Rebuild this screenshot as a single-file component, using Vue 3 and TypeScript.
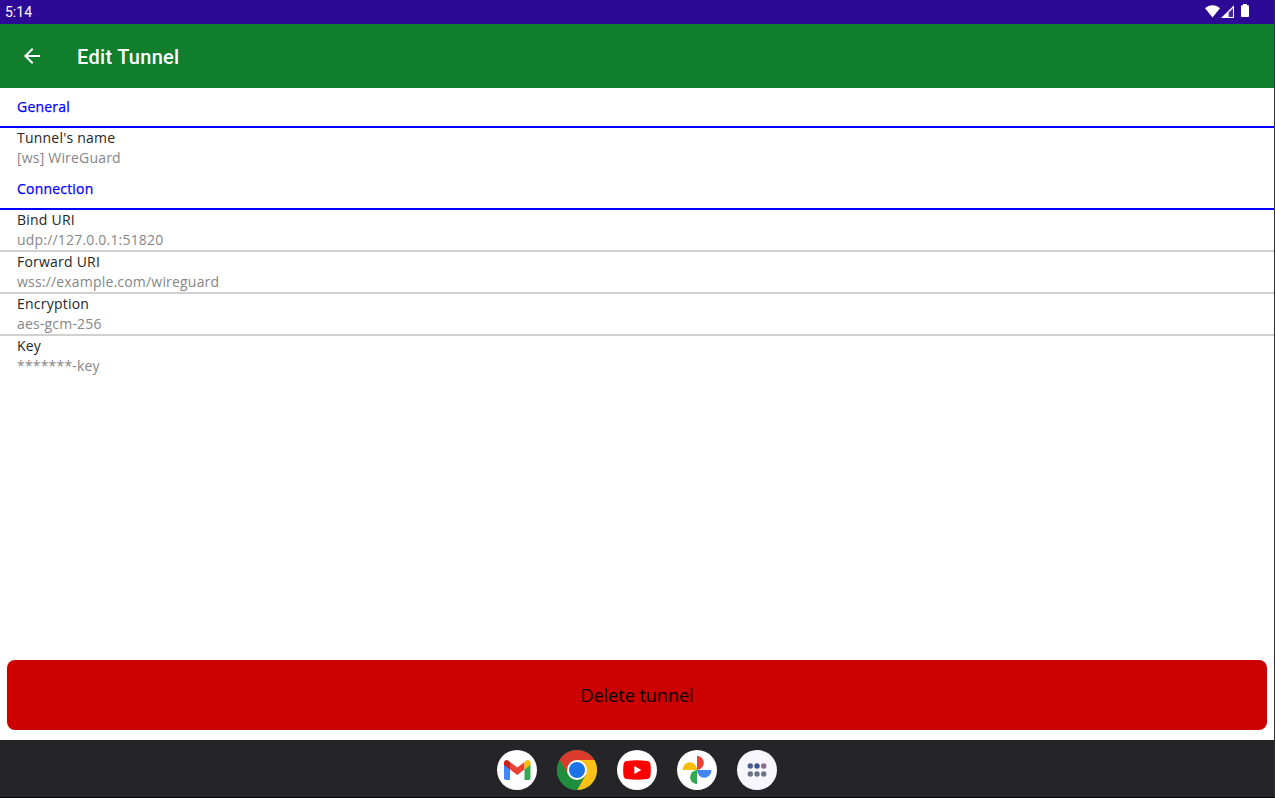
<script setup lang="ts">
interface Field {
  label: string
  value: string
}
interface Section {
  title: string
  fields: Field[]
}

const sections: Section[] = [
  { title: 'General', fields: [{ label: "Tunnel's name", value: '[ws] WireGuard' }] },
  {
    title: 'Connection',
    fields: [
      { label: 'Bind URI', value: 'udp://127.0.0.1:51820' },
      { label: 'Forward URI', value: 'wss://example.com/wireguard' },
      { label: 'Encryption', value: 'aes-gcm-256' },
      { label: 'Key', value: '*******-key' },
    ],
  },
]
</script>

<template>
  <div class="screen">
    <div class="status">
      <span class="clock">5:14</span>
      <svg class="status-icons" width="50" height="24" viewBox="0 0 50 24">
        <path d="M0 8.3C4.3 4.3 11 4.3 15 8.3L7.5 17.5Z" fill="#fff" />
        <path d="M16 18L29 5.300V18Z" fill="#fff" />
        <path d="M23.700 12.400L28 8.200V17H23.700Z" fill="#2c0a96" />
        <path d="M23.700 12.400L28 8.200V17H23.700Z" fill="#fff" opacity=".12" />
        <path d="M38 5.3V4H42V5.3H43.2Q44 5.3 44 6.1V16.2Q44 17 43.2 17H36.8Q36 17 36 16.2V6.1Q36 5.3 36.8 5.3Z" fill="#fff" />
      </svg>
    </div>
    <header class="appbar">
      <svg class="back" width="24" height="24" viewBox="0 0 24 24">
        <path d="M20 11H7.83l5.59-5.59L12 4l-8 8 8 8 1.41-1.41L7.83 13H20v-2z" fill="#fff" />
      </svg>
      <h1>Edit Tunnel</h1>
    </header>
    <main>
      <section v-for="s in sections" :key="s.title">
        <h2>{{ s.title }}</h2>
        <div v-for="f in s.fields" :key="f.label" class="field">
          <div class="label">{{ f.label }}</div>
          <div class="value">{{ f.value }}</div>
        </div>
      </section>
      <button class="delete" type="button">Delete tunnel</button>
    </main>
    <nav class="dock">
      <svg width="40" height="40" viewBox="0 0 40 40">
        <circle cx="20" cy="20" r="20" fill="#fff" />
        <path d="M7 14V28.2Q7 30 8.8 30H13V18.5Z" fill="#4285f4" />
        <path d="M27.500 18.500V30H31.700Q33.500 30 33.500 28.200V14Z" fill="#34a853" />
        <path d="M13 12L20.250 17.500L27.500 12V19.500L20.250 25L13 19.500Z" fill="#ea4335" />
        <path d="M7 13Q7 10 9.800 10Q11 10 13 12V19.500L7 15Z" fill="#c5221f" />
        <path d="M33.500 13Q33.500 10 30.700 10Q29.500 10 27.500 12V19.500L33.500 15Z" fill="#fbbc04" />
      </svg>
      <svg width="40" height="40" viewBox="0 0 40 40">
        <circle cx="20" cy="20" r="20" fill="#34a853" />
        <path d="M20 10H37.320A20 20 0 0 1 20 40L28.660 25Z" fill="#fbc116" />
        <path d="M20 10H37.320A20 20 0 0 0 2.680 10L11.340 25A10 10 0 0 1 20 10Z" fill="#db3a2c" />
        <path d="M2.680 10L11.340 25A10 10 0 0 0 28.660 25L20 40A20 20 0 0 1 2.680 10Z" fill="#1e8e3e" />
        <circle cx="20" cy="20" r="10" fill="#fff" />
        <circle cx="20" cy="20" r="8" fill="#1a73e8" />
      </svg>
      <svg width="40" height="40" viewBox="0 0 40 40">
        <circle cx="20" cy="20" r="20" fill="#fff" />
        <path d="M10 11Q20 9.600 30 11Q33 11.300 33.400 14Q34.300 20 33.400 26Q33 28.700 30 29Q20 30.400 10 29Q7 28.700 6.600 26Q5.700 20 6.600 14Q7 11.300 10 11Z" fill="#f00" />
        <path d="M17.300 16V24L24.300 20Z" fill="#fff" />
      </svg>
      <svg width="40" height="40" viewBox="0 0 40 40">
        <circle cx="20" cy="20" r="20" fill="#fff" />
        <path d="M20 20V5.700A7.800 7.200 0 0 1 20 20Z" fill="#ea4335" />
        <path d="M20 20H34.500A7.200 7.800 0 0 1 20 20Z" fill="#4285f4" />
        <path d="M20 20V34.300A7.800 7.200 0 0 1 20 20Z" fill="#34a853" />
        <path d="M20 20H5.500A7.200 7.800 0 0 1 20 20Z" fill="#fbbc04" />
      </svg>
      <svg width="40" height="40" viewBox="0 0 40 40">
        <circle cx="20" cy="20" r="20" fill="#f8f6fd" />
        <circle cx="13.300" cy="16" r="2.700" fill="#495d92" />
        <circle cx="20" cy="16" r="2.700" fill="#3d5290" />
        <circle cx="26.700" cy="16" r="2.700" fill="#8a6b91" />
        <circle cx="13.300" cy="24" r="2.700" fill="#6c7389" />
        <circle cx="20" cy="24" r="2.700" fill="#6c7389" />
        <circle cx="26.700" cy="24" r="2.700" fill="#6c7389" />
      </svg>
    </nav>
  </div>
</template>

<style>
body {
  margin: 0;
}
</style>

<style scoped>
.screen {
  box-sizing: border-box;
  width: 1275px;
  height: 798px;
  display: flex;
  flex-direction: column;
  overflow: hidden;
  background: #fff;
  border-right: 1px solid #303033;
  border-bottom: 1px solid #050506;
  font-family: "Open Sans", sans-serif;
}
.status {
  height: 24px;
  flex: none;
  display: flex;
  justify-content: space-between;
  padding: 0 19px 0 5px;
  background: #2c0a96;
  color: #fff;
}
.clock {
  font: 14px/24px Roboto, sans-serif;
}
.appbar {
  height: 64px;
  flex: none;
  display: flex;
  align-items: center;
  padding-left: 20px;
  background: #117e2d;
}
h1 {
  margin: 2px 0 0 33px;
  color: #fff;
  font: 500 20px/24px Roboto, sans-serif;
  letter-spacing: 0.3px;
}
main {
  flex: 1;
  display: flex;
  flex-direction: column;
}
h2 {
  height: 38px;
  margin: 0;
  padding-left: 17px;
  border-bottom: 2px solid #00f;
  color: #00f;
  font-size: 14px;
  line-height: 38px;
  font-weight: 400;
  letter-spacing: 0.2px;
  -webkit-text-stroke: 0.25px #00f;
}
.field {
  padding-left: 17px;
  border-bottom: 2px solid #d0d0d0;
  font-size: 14px;
  line-height: 20px;
}
.field:last-child {
  border-color: transparent;
}
.label {
  color: #262626;
  letter-spacing: 0.22px;
}
.value {
  color: #868686;
  letter-spacing: 0.19px;
}
.delete {
  height: 70px;
  margin: auto 7px 10px;
  padding: 0;
  border: 0;
  border-radius: 8px;
  background: #c00;
  color: #000;
  font: 18px/70px "Open Sans", sans-serif;
}
.dock {
  height: 57px;
  flex: none;
  display: flex;
  justify-content: center;
  gap: 20px;
  box-sizing: border-box;
  padding-top: 10px;
  background: #252529;
}
</style>
